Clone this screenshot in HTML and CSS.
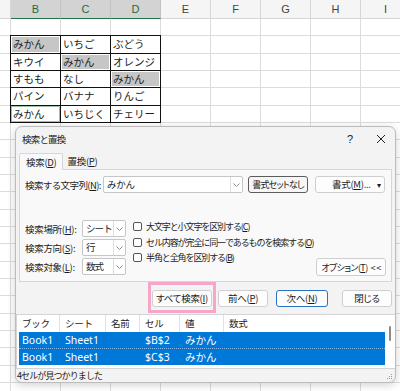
FILE: index.html
```html
<!DOCTYPE html>
<html lang="ja">
<head>
    <meta charset="UTF-8">
    <meta name="viewport" content="width=device-width, initial-scale=1.0">
    <title>検索と置換</title>
    <link rel="stylesheet" href="styles.css">
</head>
<body>
    <div class="sheet">
        <div class="col-heads">
            <div class="ch ch-a"></div>
            <div class="ch sel">B</div>
            <div class="ch sel">C</div>
            <div class="ch sel">D</div>
            <div class="ch">E</div>
            <div class="ch">F</div>
            <div class="ch">G</div>
            <div class="ch">H</div>
            <div class="ch">I</div>
        </div>
        <div class="cells">
            <div class="data">
                <div class="cell hit">みかん</div><div class="cell">いちご</div><div class="cell">ぶどう</div>
                <div class="cell">キウイ</div><div class="cell hit">みかん</div><div class="cell">オレンジ</div>
                <div class="cell">すもも</div><div class="cell">なし</div><div class="cell hit">みかん</div>
                <div class="cell">パイン</div><div class="cell">バナナ</div><div class="cell">りんご</div>
                <div class="cell active">みかん</div><div class="cell">いちじく</div><div class="cell">チェリー</div>
            </div>
        </div>
    </div>

    <div class="dialog">
        <div class="titlebar">
            <span class="title">検索と置換</span>
            <span class="tb-help">?</span>
            <span class="tb-close">
                <svg width="10" height="10" viewBox="0 0 10 10"><path d="M1 1L9 9M9 1L1 9" stroke="#222" stroke-width="1"/></svg>
            </span>
        </div>

        <div class="tabs">
            <span class="tab active">検索(<u>D</u>)</span>
            <span class="tab">置換(<u>P</u>)</span>
        </div>

        <div class="panel">
            <div class="find-row">
                <label class="find-label">検索する文字列(<u>N</u>):</label>
                <div class="combo combo-find">
                    <span class="combo-val">みかん</span>
                    <span class="combo-arrow"><svg width="7" height="4" viewBox="0 0 7 4"><path d="M0.5 0.5L3.5 3.5L6.5 0.5" fill="none" stroke="#8a8a8a"/></svg></span>
                </div>
                <button class="btn btn-noformat">書式セットなし</button>
                <button class="btn btn-format"><span>書式(<u>M</u>)...</span><span class="caret">▾</span></button>
            </div>

            <div class="opts">
                <div class="opt-fields">
                    <div class="field">
                        <label>検索場所(<u>H</u>):</label>
                        <div class="combo combo-sm">
                            <span class="combo-val">シート</span>
                            <span class="combo-arrow"><svg width="7" height="4" viewBox="0 0 7 4"><path d="M0.5 0.5L3.5 3.5L6.5 0.5" fill="none" stroke="#8a8a8a"/></svg></span>
                        </div>
                    </div>
                    <div class="field">
                        <label>検索方向(<u>S</u>):</label>
                        <div class="combo combo-sm">
                            <span class="combo-val">行</span>
                            <span class="combo-arrow"><svg width="7" height="4" viewBox="0 0 7 4"><path d="M0.5 0.5L3.5 3.5L6.5 0.5" fill="none" stroke="#8a8a8a"/></svg></span>
                        </div>
                    </div>
                    <div class="field">
                        <label>検索対象(<u>L</u>):</label>
                        <div class="combo combo-sm">
                            <span class="combo-val">数式</span>
                            <span class="combo-arrow"><svg width="7" height="4" viewBox="0 0 7 4"><path d="M0.5 0.5L3.5 3.5L6.5 0.5" fill="none" stroke="#8a8a8a"/></svg></span>
                        </div>
                    </div>
                </div>
                <div class="checks">
                    <div class="check"><span class="box"></span>大文字と小文字を区別する(<u>C</u>)</div>
                    <div class="check"><span class="box"></span>セル内容が完全に同一であるものを検索する(<u>O</u>)</div>
                    <div class="check"><span class="box"></span>半角と全角を区別する(<u>B</u>)</div>
                </div>
                <button class="btn btn-options">オプション(<u>T</u>)&nbsp; &lt; &lt;</button>
            </div>
        </div>

        <div class="actions">
            <button class="btn btn-findall">すべて検索(<u>I</u>)</button>
            <button class="btn btn-prev">前へ(<u>P</u>)</button>
            <button class="btn btn-next">次へ(<u>N</u>)</button>
            <button class="btn btn-close">閉じる</button>
        </div>

        <div class="results">
            <div class="res-row res-head">
                <span class="c-book">ブック</span>
                <span class="c-sheet">シート</span>
                <span class="c-name">名前</span>
                <span class="c-cell">セル</span>
                <span class="c-val">値</span>
                <span class="c-formula">数式</span>
            </div>
            <div class="res-row picked">
                <span class="c-book">Book1</span>
                <span class="c-sheet">Sheet1</span>
                <span class="c-name"></span>
                <span class="c-cell">$B$2</span>
                <span class="c-val">みかん</span>
                <span class="c-formula"></span>
            </div>
            <div class="res-row picked focus-row">
                <span class="c-book">Book1</span>
                <span class="c-sheet">Sheet1</span>
                <span class="c-name"></span>
                <span class="c-cell">$C$3</span>
                <span class="c-val">みかん</span>
                <span class="c-formula"></span>
            </div>
            <span class="scroll-thumb"></span>
        </div>

        <div class="status">
            <span>4セルが見つかりました</span>
            <svg class="grip" width="7" height="7" viewBox="0 0 7 7">
                <rect x="5" y="1" width="1" height="1" fill="#9a9a9a"/>
                <rect x="3" y="3" width="1" height="1" fill="#9a9a9a"/>
                <rect x="5" y="3" width="1" height="1" fill="#9a9a9a"/>
                <rect x="1" y="5" width="1" height="1" fill="#9a9a9a"/>
                <rect x="3" y="5" width="1" height="1" fill="#9a9a9a"/>
                <rect x="5" y="5" width="1" height="1" fill="#9a9a9a"/>
            </svg>
        </div>
    </div>
</body>
</html>
```

FILE: styles.css
```css
body {
  margin: 0;
  padding: 0;
  background: #fff;
  font-family: "Noto Sans CJK JP", sans-serif;
}

/* spreadsheet behind the dialog */
.sheet {
  width: 400px;
  height: 391px;
  overflow: hidden;
}

.col-heads {
  display: grid;
  grid-template-columns: 11px repeat(8, 50px);
  height: 19px;
}

.ch {
  box-sizing: border-box;
  background: #f5f5f5;
  border-right: 1px solid #d6d6d6;
  border-bottom: 1px solid #d6d6d6;
  color: #444;
  font: 11px "Liberation Sans", Arial, sans-serif;
  line-height: 18px;
  text-align: center;
}

.ch.sel {
  background: #d3d3d3;
  color: #1d6b40;
  border-right-color: #c2c2c2;
  border-bottom: 1px solid #1f7244;
}

.cells {
  height: 372px;
  background-color: #fff;
  background-image:
    repeating-linear-gradient(to right, #dcdcdc 0 1px, transparent 1px 50px),
    repeating-linear-gradient(to bottom, transparent 0 16.33px, #dcdcdc 16.33px 17.33px);
  background-position: 10px 0, 0 0;
  padding-top: 16.33px;
  box-sizing: border-box;
}

.data {
  display: grid;
  grid-template-columns: repeat(3, 50px);
  grid-auto-rows: 17.33px;
  width: 150px;
  margin-left: 10px;
  border-top: 1px solid #111;
  border-left: 1px solid #111;
}

.cell {
  box-sizing: border-box;
  border-right: 1px solid #111;
  border-bottom: 1px solid #111;
  background: #fff;
  font-size: 10.5px;
  line-height: 16px;
  padding-left: 2px;
  color: #222;
  white-space: nowrap;
}

.cell.hit {
  background: #c6c6c6;
  box-shadow: inset 0 0 0 1px #fff;
}

.cell.active {
  box-shadow: inset 0 0 0 1px #9fc1a8;
}

/* find & replace dialog */
.dialog {
  position: absolute;
  left: 15px;
  top: 126px;
  width: 381px;
  height: 257px;
  box-sizing: border-box;
  background: #f3f3f3;
  border: 1px solid #bcbcbc;
  border-radius: 7px;
  box-shadow: 0 2px 8px rgba(0, 0, 0, 0.18);
  display: flex;
  flex-direction: column;
  font: 9.5px "Noto Sans CJK JP", sans-serif;
  letter-spacing: -0.3px;
  white-space: nowrap;
  color: #1b1b1b;
}

.dialog u {
  text-decoration: underline;
  text-underline-offset: 1px;
}

.titlebar {
  display: flex;
  align-items: center;
  height: 24px;
  padding-left: 6px;
}

.title {
  flex: 1;
  letter-spacing: -0.8px;
}

.tb-help {
  width: 34px;
  text-align: center;
  font: 11px "Liberation Sans", Arial, sans-serif;
  color: #222;
}

.tb-close {
  width: 28px;
  display: flex;
  justify-content: center;
}

.tabs {
  display: flex;
  margin: 2px 0 -1px 3px;
  height: 17px;
  position: relative;
  z-index: 1;
}

.tab {
  box-sizing: border-box;
  padding: 0 4px;
  line-height: 16px;
  height: 17px;
}

.tab.active {
  padding: 0 6px;
  background: #f9f9f9;
  border: 1px solid #d6d6d6;
  border-bottom: none;
  border-radius: 2px 2px 0 0;
}

.panel {
  box-sizing: border-box;
  height: 113px;
  margin: 0 3px;
  padding: 6px 5px 5px;
  background: #f9f9f9;
  border: 1px solid #d6d6d6;
}

.find-row {
  display: flex;
  align-items: center;
  height: 17px;
}

.find-label {
  width: 78px;
  letter-spacing: -0.6px;
}

.combo {
  box-sizing: border-box;
  display: flex;
  height: 17px;
  background: #fff;
  border: 1px solid #c6c6c6;
  border-radius: 2px;
}

.combo-val {
  flex: 1;
  padding-left: 3px;
  line-height: 15px;
  overflow: hidden;
}

.combo-sm .combo-val {
  letter-spacing: -0.9px;
}

.combo-arrow {
  width: 11px;
  border-left: 1px solid #dedede;
  display: flex;
  align-items: center;
  justify-content: center;
}

.combo-find {
  width: 140px;
}

.combo-sm {
  width: 44px;
}

.btn {
  box-sizing: border-box;
  height: 17px;
  padding: 0;
  background: #fdfdfd;
  border: 1px solid #cfcfcf;
  border-radius: 3px;
  font: inherit;
  font-variant-east-asian: proportional-width;
  font-feature-settings: "palt" 1;
  letter-spacing: inherit;
  color: inherit;
  line-height: 15px;
  white-space: nowrap;
  overflow: hidden;
}

.btn-noformat {
  width: 60px;
  margin-left: 5px;
  border-color: #5c5c5c;
  background: #f6f6f6;
  font-size: 9px;
  letter-spacing: -0.8px;
}

.btn-format {
  width: 70px;
  margin-left: 7px;
  display: flex;
  align-items: center;
  padding: 0 3px 0 16px;
}

.btn-format span:first-child {
  flex: 1;
  text-align: left;
}

.caret {
  font-size: 8px;
}

.opts {
  display: flex;
  margin-top: 27px;
  height: 56px;
}

.opt-fields {
  display: flex;
  flex-direction: column;
  gap: 2px;
}

.field {
  display: flex;
  align-items: center;
  height: 17px;
}

.field label {
  width: 57px;
}

.checks {
  margin: -1px 0 0 7px;
  flex: 1;
  min-width: 0;
  font-size: 9px;
  letter-spacing: -1.1px;
}

.check {
  display: flex;
  align-items: center;
  height: 15.5px;
}

.box {
  box-sizing: border-box;
  flex: none;
  width: 9px;
  height: 9px;
  border: 1px solid #555;
  border-radius: 2px;
  background: #fff;
  margin-right: 4px;
}

.btn-options {
  align-self: flex-end;
  flex: none;
  width: 70px;
  height: 18px;
  font-size: 9px;
  letter-spacing: -0.6px;
}

.actions {
  display: flex;
  justify-content: flex-end;
  margin: 8px 3px 0 0;
}

.btn-findall {
  width: 60px;
  position: relative;
  overflow: visible;
}

/* pink highlight drawn around the button in the screenshot */
.btn-findall::after {
  content: "";
  position: absolute;
  left: -5px;
  right: -5px;
  top: -9px;
  bottom: -7px;
  border: 3px solid #f5a6c9;
}

.btn-prev {
  width: 50px;
  margin-left: 6px;
}

.btn-next {
  width: 52px;
  margin-left: 8px;
  border-color: #2a73c2;
}

.btn-close {
  width: 50px;
  margin-left: 14px;
}

.results {
  position: relative;
  box-sizing: border-box;
  height: 55px;
  margin-top: 7px;
  padding: 0 10px 0 2px;
  background: #fff;
  border-top: 1px solid #d4d4d4;
  border-bottom: 1px solid #d4d4d4;
  border-left: 1px solid #d4d4d4;
}

.res-row {
  display: flex;
  height: 16px;
  line-height: 16px;
}

.res-row span {
  box-sizing: border-box;
  padding-left: 5px;
}

.res-head {
  height: 17px;
  line-height: 17px;
}

.res-head span {
  border-right: 1px solid #e2e2e2;
}

.res-row .c-book { width: 41px; padding-left: 3px; }
.res-row .c-sheet { width: 46px; }
.res-row .c-name { width: 34px; }
.res-row .c-cell { width: 40px; }
.res-row .c-val { width: 44px; }
.res-row .c-formula { flex: 1; border-right: none; }

.picked {
  background: #0078d7;
  color: #fff;
  font-family: "Noto Sans", "Noto Sans CJK JP", sans-serif;
  font-size: 10.5px;
  letter-spacing: 0;
}

.focus-row {
  border-top: 1px dotted #8ab8e6;
}

.scroll-thumb {
  position: absolute;
  right: 4px;
  top: 11px;
  width: 2px;
  height: 15px;
  border-radius: 1px;
  background: #8a8a8a;
}

.status {
  flex: 1;
  display: flex;
  align-items: center;
  padding: 0 2px 0 1px;
  font-size: 9px;
  letter-spacing: -0.9px;
}

.status span {
  flex: 1;
}

.grip {
  align-self: flex-end;
  margin-bottom: 2px;
}
```
